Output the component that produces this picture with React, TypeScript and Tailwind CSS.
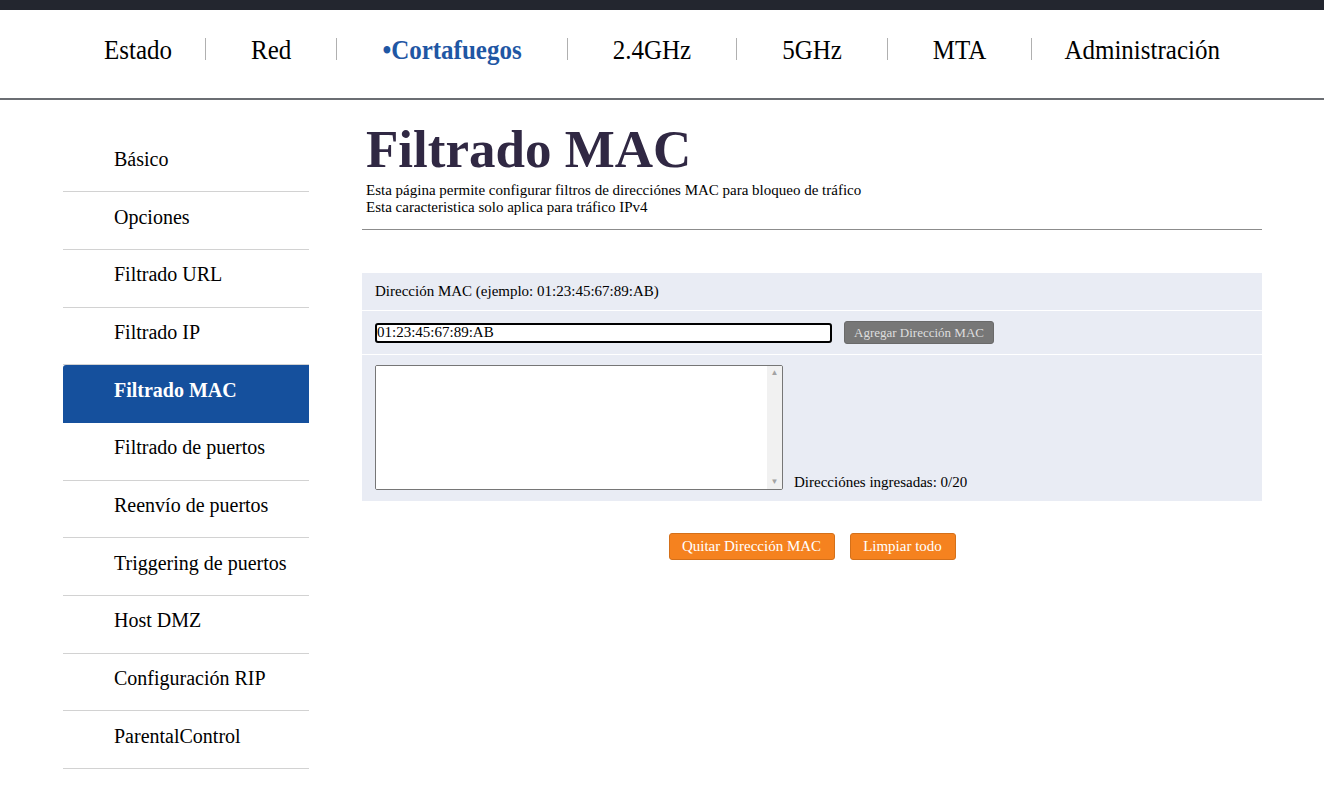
import { useState } from "react";

const topMenu = [
  { title: "Estado", active: false },
  { title: "Red", active: false },
  { title: "Cortafuegos", active: true },
  { title: "2.4GHz", active: false },
  { title: "5GHz", active: false },
  { title: "MTA", active: false },
  { title: "Administración", active: false },
];

const sideMenu = [
  "Básico",
  "Opciones",
  "Filtrado URL",
  "Filtrado IP",
  "Filtrado MAC",
  "Filtrado de puertos",
  "Reenvío de puertos",
  "Triggering de puertos",
  "Host DMZ",
  "Configuración RIP",
  "ParentalControl",
];

function TopNav() {
  return (
    <nav className="flex h-[90px] items-center justify-center border-b-2 border-[#6b6e73] pb-[10px]">
      {topMenu.map((item, i) => (
        <div key={item.title} className="flex items-center">
          {i > 0 ? <span className="h-[22px] w-px bg-[#b0b0b0]" /> : null}
          <a
            href="#"
            className={
              (i === 0 ? "pr-[33px] " : i === topMenu.length - 1 ? "pl-[32px] " : "px-[45px] ") +
              (item.active ? "font-bold text-[#1f57a4]" : "text-black") +
              " scale-y-[1.12] text-[25px] leading-none"
            }
          >
            {item.active ? "•" : null}
            {item.title}
          </a>
        </div>
      ))}
    </nav>
  );
}

function Sidebar() {
  return (
    <ul className="mt-[34.5px] w-[246px] shrink-0">
      {sideMenu.map((title) => {
        const active = title === "Filtrado MAC";
        return (
          <li
            key={title}
            className={
              active
                ? "flex h-[57.7px] items-center rounded-tl-[3px] border-b border-[#15509d] bg-[#15509d] pb-[8px] pl-[51px] text-[20px] font-bold text-white"
                : "flex h-[57.7px] items-center border-b border-[#d2d2d2] pb-[8px] pl-[51px] text-[20px] text-black"
            }
          >
            {title}
          </li>
        );
      })}
    </ul>
  );
}

export default function App() {
  const [mac, setMac] = useState("01:23:45:67:89:AB");

  return (
    <div className="min-h-screen bg-white font-['Liberation_Serif',serif] text-black">
      <div className="h-[10px] bg-[#23262f]" />
      <TopNav />
      <div className="flex pl-[63px]">
        <Sidebar />
        <main className="ml-[53px] w-[900px]">
          <div className="pl-[4px]">
            <h1 className="mt-[23px] text-[53px] font-bold leading-none text-[#302843]">Filtrado MAC</h1>
            <p className="mt-[6px] text-[15px] leading-[17px]">
              Esta página permite configurar filtros de direcciónes MAC para bloqueo de tráfico
            </p>
            <p className="text-[15px] leading-[17px]">Esta caracteristica solo aplica para tráfico IPv4</p>
          </div>
          <hr className="mt-[13px] border-t border-[#8c8c8c]" />

          <div className="mt-[43px] bg-[#e9ecf4] text-[15px]">
            <div className="flex h-[38px] items-center border-b border-white pl-[13px]">
              Dirección MAC (ejemplo: 01:23:45:67:89:AB)
            </div>
            <div className="flex h-[44px] items-center gap-[12px] border-b border-white pl-[13px]">
              <input
                value={mac}
                onChange={(e) => setMac(e.target.value)}
                className="h-[20px] w-[457px] rounded-[3px] border-2 border-black bg-white px-0 text-[15px] leading-none outline-none"
              />
              <button className="h-[23px] w-[150px] rounded-[3px] border border-[#6a6a6a] bg-[#777777] text-[13px] text-[#dedede]">
                Agregar Dirección MAC
              </button>
            </div>
            <div className="flex items-end gap-[11px] pb-[11px] pl-[13px] pt-[10px]">
              <div className="flex h-[125px] w-[408px] overflow-hidden rounded-[2px] border border-[#767676] bg-white">
                <textarea className="h-full flex-1 resize-none bg-white outline-none" />
                <div className="flex w-[15px] flex-col items-center justify-between bg-[#f1f1f1] py-[3px] text-[8px] leading-none text-[#a3a3a3]">
                  <span>▲</span>
                  <span>▼</span>
                </div>
              </div>
              <span className="leading-[16px]">Direcciónes ingresadas: 0/20</span>
            </div>
          </div>

          <div className="mt-[32px] flex justify-center gap-[15px]">
            <button className="h-[27px] w-[166px] rounded-[3px] border border-[#d4701a] bg-[#f5821f] text-[15px] text-white">
              Quitar Dirección MAC
            </button>
            <button className="h-[27px] w-[106px] rounded-[3px] border border-[#d4701a] bg-[#f5821f] text-[15px] text-white">
              Limpiar todo
            </button>
          </div>
        </main>
      </div>
    </div>
  );
}
